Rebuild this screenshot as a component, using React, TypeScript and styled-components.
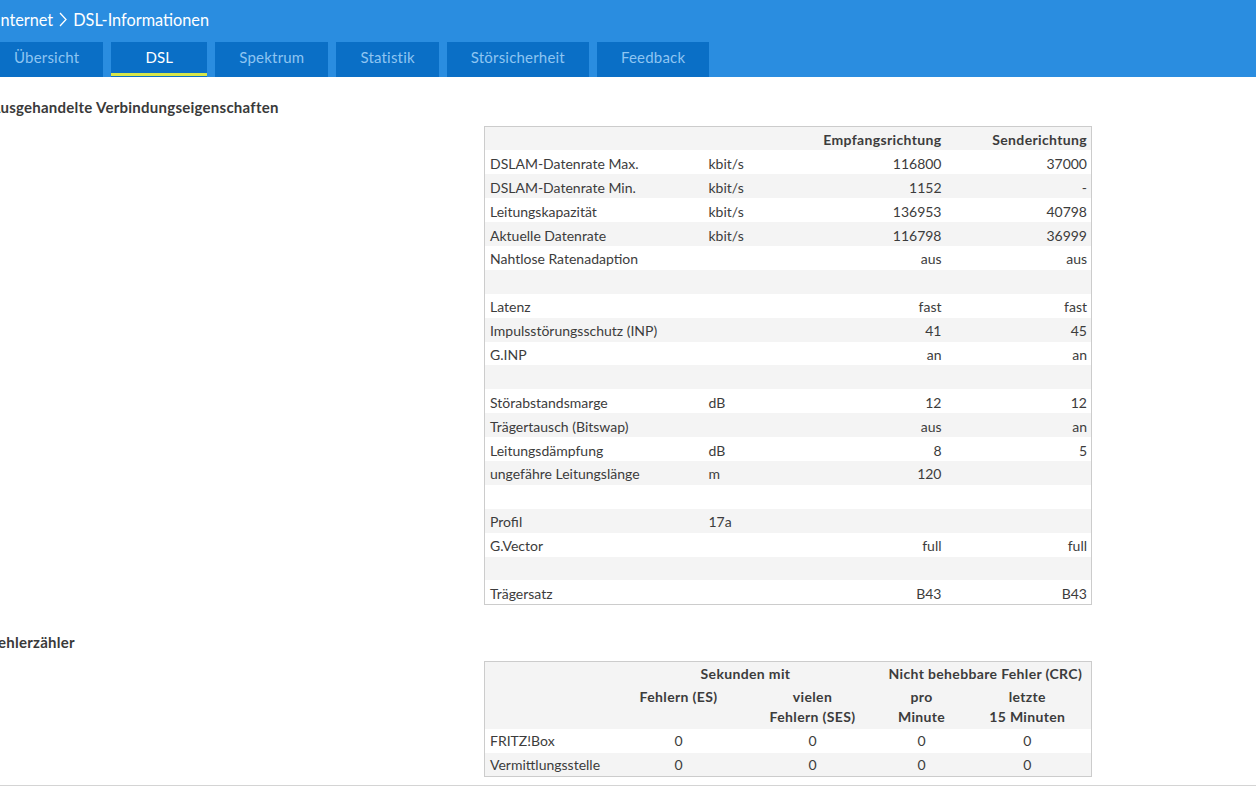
import React from 'react'
import styled, { createGlobalStyle } from 'styled-components'

const GlobalStyle = createGlobalStyle`
  html, body {
    margin: 0;
    padding: 0;
    background: #ffffff;
    overflow: hidden;
  }
  body {
    font-family: Lato, "Noto Sans", sans-serif;
    color: #3c3c3c;
  }
`

const Page = styled.div`
  width: 1256px;
  height: 811px;
  overflow: hidden;
`

const Shifted = styled.div`
  margin-left: -10px;
`

const Header = styled.header`
  background: #2a8de0;
  height: 77px;
  display: flex;
  flex-direction: column;
  margin-left: 10px;
`

const Title = styled.div`
  height: 42px;
  display: flex;
  align-items: center;
  gap: 6px;
  padding: 0 0 4px 0;
  margin-left: -4px;
  color: #ffffff;
  font-size: 16.3px;
  box-sizing: border-box;
`

const Tabs = styled.nav`
  display: flex;
  gap: 8px;
  height: 35px;
  margin-left: -10px;
`

const Tab = styled.div<{ $active?: boolean }>`
  position: relative;
  min-width: 96px;
  padding: 0 24px 5px;
  box-sizing: border-box;
  background: #0a6fc6;
  color: ${({ $active }) => ($active ? '#ffffff' : '#8ec5f2')};
  font-size: 15px;
  letter-spacing: 0.2px;
  display: flex;
  align-items: center;
  justify-content: center;

  &::after {
    content: '';
    display: ${({ $active }) => ($active ? 'block' : 'none')};
    position: absolute;
    left: 0;
    right: 0;
    bottom: 1px;
    height: 3px;
    background: #d6e64b;
  }
`

const Main = styled.main`
  padding-top: 21px;
`

const Heading = styled.h2`
  margin: 0 0 10px 0;
  font-size: 15px;
  letter-spacing: 0.25px;
  font-weight: 700;
  color: #3a3a3a;
  line-height: 18px;
`

const Table = styled.table<{ $offset?: number }>`
  margin-left: 494px;
  width: 607px;
  border-collapse: collapse;
  border: 1px solid #cccccc;
  font-size: 14px;
  color: #3c3c3c;
  table-layout: fixed;

  td {
    padding-top: ${({ $offset }) => $offset || 0}px;
  }
`

const Row = styled.tr`
  height: 23.9px;
  &:nth-child(odd) {
    background: #f4f4f4;
  }
`

const Cell = styled.td<{ $align?: string; $bold?: boolean; $left?: number }>`
  padding-left: ${({ $left }) => $left ?? 4}px;
  padding-right: 4px;
  padding-bottom: 0;
  text-align: ${({ $align }) => $align || 'left'};
  font-weight: ${({ $bold }) => ($bold ? 700 : 400)};
  letter-spacing: ${({ $bold }) => ($bold ? '0.35px' : '0')};
  white-space: nowrap;
  vertical-align: middle;
  line-height: 20px;
`

const HeadCell = styled(Cell)`
  && {
    vertical-align: top;
    padding-top: 2px;
  }
`

const Section = styled.section<{ $last?: boolean }>`
  margin-bottom: ${({ $last }) => ($last ? '0' : '28px')};
`

const FooterLine = styled.div`
  margin-top: 8px;
  margin-left: 10px;
  border-top: 1px solid #d4d4d4;
`

const Chevron = () => (
  <svg width="8" height="15" viewBox="0 0 8 15">
    <path d="M1 1 L7 7.5 L1 14" fill="none" stroke="#ffffff" strokeWidth="1.3" />
  </svg>
)

const tabs = ['Übersicht', 'DSL', 'Spektrum', 'Statistik', 'Störsicherheit', 'Feedback']

type R = [string, string, string, string]
const rows: R[] = [
  ['DSLAM-Datenrate Max.', 'kbit/s', '116800', '37000'],
  ['DSLAM-Datenrate Min.', 'kbit/s', '1152', '-'],
  ['Leitungskapazität', 'kbit/s', '136953', '40798'],
  ['Aktuelle Datenrate', 'kbit/s', '116798', '36999'],
  ['Nahtlose Ratenadaption', '', 'aus', 'aus'],
  ['', '', '', ''],
  ['Latenz', '', 'fast', 'fast'],
  ['Impulsstörungsschutz (INP)', '', '41', '45'],
  ['G.INP', '', 'an', 'an'],
  ['', '', '', ''],
  ['Störabstandsmarge', 'dB', '12', '12'],
  ['Trägertausch (Bitswap)', '', 'aus', 'an'],
  ['Leitungsdämpfung', 'dB', '8', '5'],
  ['ungefähre Leitungslänge', 'm', '120', ''],
  ['', '', '', ''],
  ['Profil', '17a', '', ''],
  ['G.Vector', '', 'full', 'full'],
  ['', '', '', ''],
  ['Trägersatz', '', 'B43', 'B43'],
]

const errors: [string, string, string, string, string][] = [
  ['FRITZ!Box', '0', '0', '0', '0'],
  ['Vermittlungsstelle', '0', '0', '0', '0'],
]

export default function App() {
  return (
    <Page>
      <GlobalStyle />
      <Shifted>
        <Header>
          <Title>
            <span>Internet</span>
            <Chevron />
            <span>DSL-Informationen</span>
          </Title>
          <Tabs>
            {tabs.map((t) => (
              <Tab key={t} $active={t === 'DSL'}>
                {t}
              </Tab>
            ))}
          </Tabs>
        </Header>
        <Main>
          <Section>
            <Heading>Ausgehandelte Verbindungseigenschaften</Heading>
            <Table $offset={3}>
              <colgroup>
                <col style={{ width: 219 }} />
                <col style={{ width: 100 }} />
                <col style={{ width: 142 }} />
                <col style={{ width: 146 }} />
              </colgroup>
              <tbody>
                <Row>
                  <Cell />
                  <Cell />
                  <Cell $align="right" $bold>Empfangsrichtung</Cell>
                  <Cell $align="right" $bold>Senderichtung</Cell>
                </Row>
                {rows.map((r, i) => (
                  <Row key={i}>
                    <Cell $left={5}>{r[0]}</Cell>
                    <Cell $left={5}>{r[1]}</Cell>
                    <Cell $align="right">{r[2]}</Cell>
                    <Cell $align="right">{r[3]}</Cell>
                  </Row>
                ))}
              </tbody>
            </Table>
          </Section>
          <Section $last>
            <Heading>Fehlerzähler</Heading>
            <Table>
              <colgroup>
                <col style={{ width: 127 }} />
                <col style={{ width: 134 }} />
                <col style={{ width: 134 }} />
                <col style={{ width: 84 }} />
                <col style={{ width: 128 }} />
              </colgroup>
              <tbody>
                <Row>
                  <Cell />
                  <Cell colSpan={2} $align="center" $bold>Sekunden mit</Cell>
                  <Cell colSpan={2} $align="center" $bold>Nicht behebbare Fehler (CRC)</Cell>
                </Row>
                <Row style={{ height: 44, background: '#f4f4f4' }}>
                  <Cell />
                  <HeadCell $align="center" $bold>Fehlern (ES)</HeadCell>
                  <HeadCell $align="center" $bold>vielen<br />Fehlern (SES)</HeadCell>
                  <HeadCell $align="center" $bold>pro<br />Minute</HeadCell>
                  <HeadCell $align="center" $bold>letzte<br />15 Minuten</HeadCell>
                </Row>
                {errors.map((r, i) => (
                  <Row key={i} style={{ background: i === 0 ? '#ffffff' : '#f4f4f4' }}>
                    <Cell $left={5}>{r[0]}</Cell>
                    <Cell $align="center">{r[1]}</Cell>
                    <Cell $align="center">{r[2]}</Cell>
                    <Cell $align="center">{r[3]}</Cell>
                    <Cell $align="center">{r[4]}</Cell>
                  </Row>
                ))}
              </tbody>
            </Table>
            <FooterLine />
          </Section>
        </Main>
      </Shifted>
    </Page>
  )
}
